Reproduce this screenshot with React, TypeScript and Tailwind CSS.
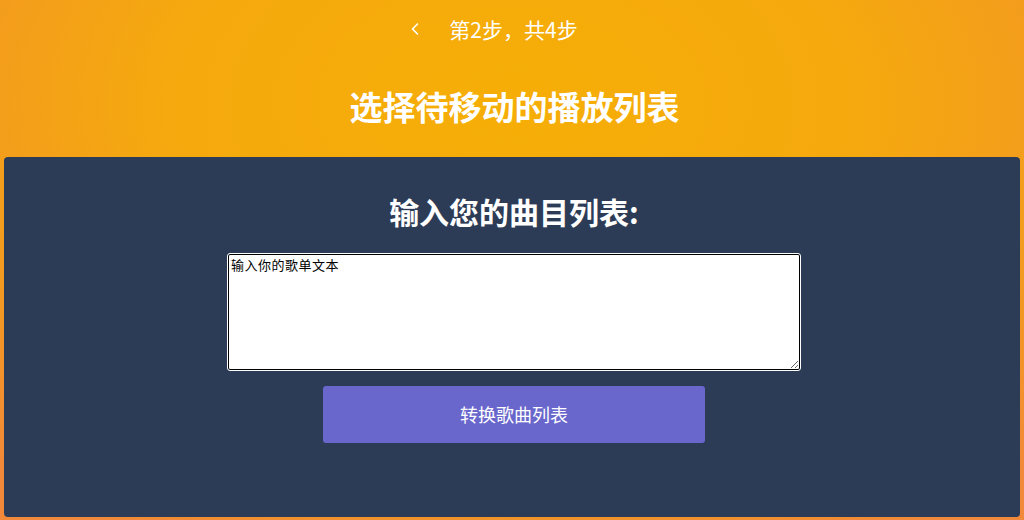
import React from 'react';
import { ChevronLeft } from 'lucide-react';

export default function App() {
  return (
    <div className="w-[1024px] h-[520px] overflow-hidden flex flex-col bg-[radial-gradient(ellipse_75%_95%_at_50%_20%,#f6ae06_0%,#f5a90e_45%,#f39a20_75%,#f2883a_100%)] font-['Noto_Sans_CJK_SC',sans-serif]">
      {/* Header */}
      <div className="h-[157px] pl-[5px] flex flex-col items-center shrink-0">
        <div className="mt-[13px] flex items-center text-white text-[21px] leading-[32px]">
          <ChevronLeft size={20} strokeWidth={2} className="-ml-[46px] mr-[24px]" />
          <span>第2步，共4步</span>
        </div>
        <h1 className="mt-[41px] text-white text-[33px] font-bold leading-[40px]">选择待移动的播放列表</h1>
      </div>

      {/* Panel */}
      <div className="mx-[4px] mb-[3px] pl-[4px] flex-1 bg-[#2d3c56] rounded-[4px] flex flex-col items-center">
        <h2 className="mt-[35px] text-white text-[30px] font-bold leading-[38px]">输入您的曲目列表:</h2>
        <textarea
          defaultValue="输入你的歌单文本"
          className="mt-[24px] w-[572px] h-[116px] bg-white text-black text-[13px] leading-[16px] tracking-[0.5px] px-[2px] pt-[2px] border border-black outline outline-1 outline-white rounded-[2px] resize-y font-['Noto_Sans_CJK_SC',monospace]"
        />
        <button className="mt-[16px] w-[382px] h-[57px] bg-[#6966cc] rounded-[3px] text-white text-[18px]">
          转换歌曲列表
        </button>
      </div>
    </div>
  );
}
